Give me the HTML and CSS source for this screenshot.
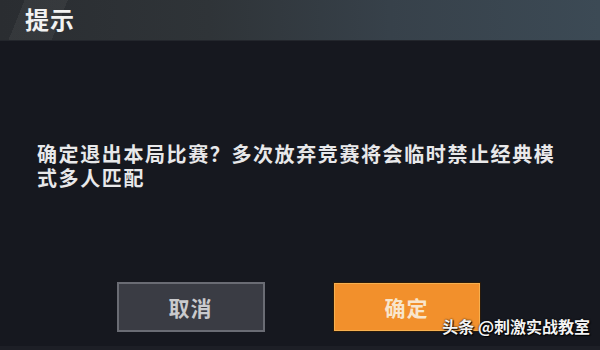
FILE: index.html
```html
<!DOCTYPE html>
<html lang="zh">
<head>
<meta charset="utf-8">
<title>提示</title>
<link rel="stylesheet" href="styles.css">
</head>
<body>
<div class="dialog">
  <div class="header"><h1 class="title">提示</h1></div>
  <p class="message">确定退出本局比赛？多次放弃竞赛将会临时禁止经典模式多人匹配</p>
  <div class="actions">
    <button class="btn btn-cancel">取消</button>
    <button class="btn btn-ok">确定</button>
  </div>
  <div class="watermark">头条 @刺激实战教室</div>
</div>
</body>
</html>
```
FILE: styles.css
```css
* { box-sizing: border-box; }
html, body { margin: 0; padding: 0; background: #16171e; }
body { width: 600px; height: 350px; overflow: hidden; font-family: "Noto Sans CJK SC", "Noto Sans", sans-serif; }
.dialog {
  position: relative;
  width: 600px;
  height: 350px;
  display: flex;
  flex-direction: column;
  background: #16181f;
  border-bottom: 4px solid #1d1f26;
}
.header {
  height: 41px;
  flex: none;
  display: flex;
  align-items: center;
  padding-left: 25px;
  background:
    linear-gradient(112deg, transparent 0 4%, rgba(255,255,255,0.05) 4% 11%, transparent 11%),
    linear-gradient(90deg, #2a2d31 0%, #2f3438 35%, #37414a 65%, #3c4a55 100%);
  border-bottom: 1px solid #23262c;
}
.title {
  margin: 0;
  font-size: 24px;
  font-weight: 700;
  color: #f2f2f2;
  letter-spacing: 1px;
  line-height: 1;
  margin-top: -2px;
}
.message {
  margin: 101px 0 0 0;
  padding: 0 30px 0 37px;
  font-size: 20px;
  line-height: 24px;
  letter-spacing: 1.6px;
  color: #e8e8ea;
  font-weight: 700;
}
.actions {
  margin-top: 92px;
  display: flex;
  justify-content: center;
  gap: 68px;
  padding-right: 3px;
}
.btn {
  width: 148px;
  height: 50px;
  font-family: inherit;
  font-size: 21px;
  font-weight: 700;
  letter-spacing: 1px;
  padding: 0;
  cursor: pointer;
}
.btn-cancel {
  background: #3a3c44;
  border: 2px solid #6a6c74;
  color: #c9cacd;
}
.btn-ok {
  background: #f2902c;
  border: 1px solid #2a1a0a;
  outline: 1px solid #f6b050;
  outline-offset: -2px;
  color: #f8e6cc;
}
.watermark {
  position: absolute;
  right: 10px;
  bottom: 8px;
  font-size: 16px;
  font-weight: 700;
  color: #f4f4f4;
  text-shadow: 0 0 2px #000, 1px 1px 1px #000;
  letter-spacing: 0;
}
```
